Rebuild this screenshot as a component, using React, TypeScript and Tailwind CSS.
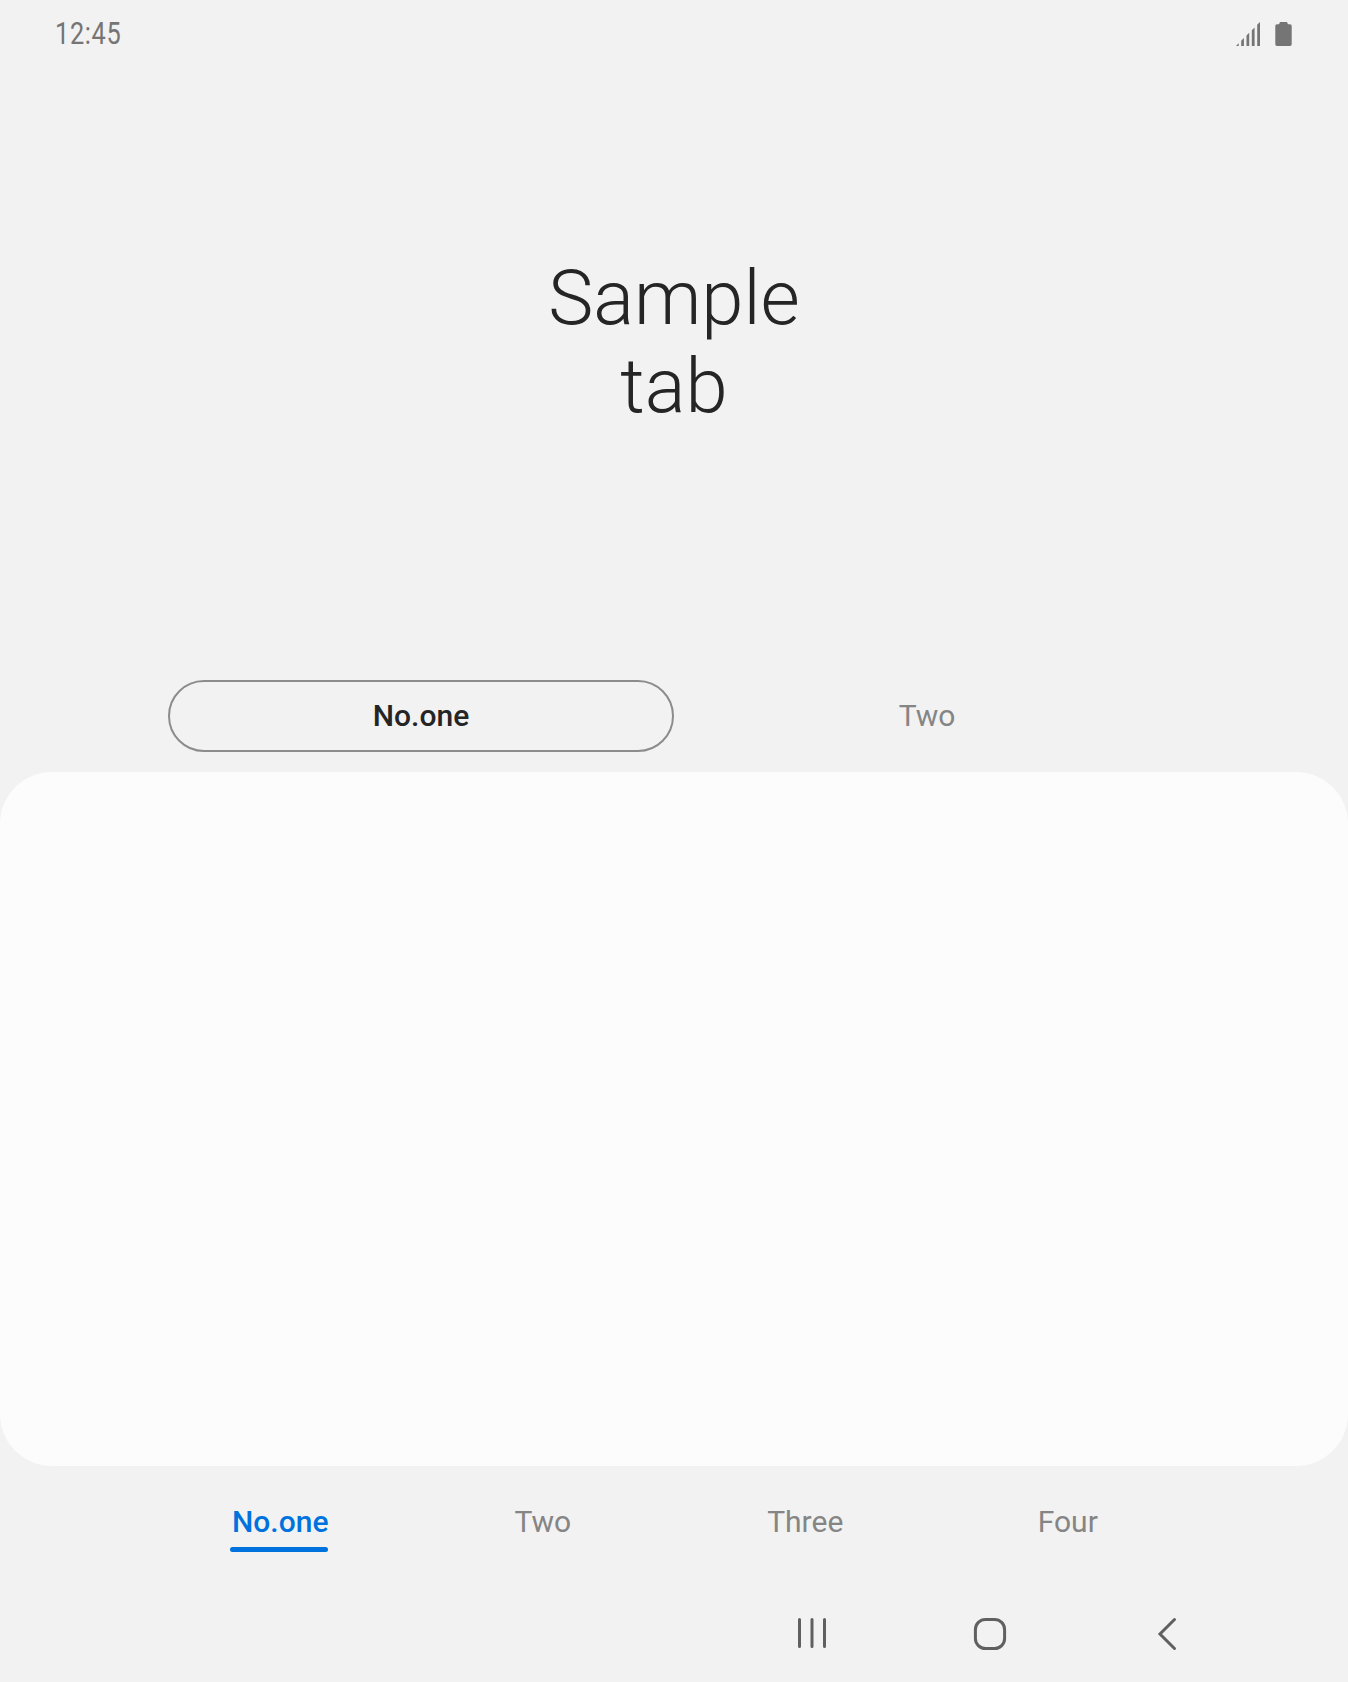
const topTabs = ["No.one", "Two"];
const bottomTabs = ["No.one", "Two", "Three", "Four"];

function SignalIcon() {
  return (
    <svg width="26" height="26" viewBox="0 0 26 26" fill="#757575">
      <path d="M0 25L2.700 22.300V25ZM5.200 25V19.700L7.900 17V25ZM10.500 25V14.500L13.200 11.800V25ZM15.800 25V9.200L18.600 6.400V25ZM21.200 25V3.800L24 1V25Z" />
    </svg>
  );
}

function BatteryIcon() {
  return (
    <svg width="17" height="26" viewBox="0 0 17 26" fill="#757575">
      <path d="M4 3.200L5 1H12L13 3.200H15Q16.700 3.200 16.700 5V23.300Q16.700 25 15 25H2Q0.300 25 0.300 23.300V5Q0.300 3.200 2 3.200Z" />
    </svg>
  );
}

export default function App() {
  return (
    <main className="flex h-[1682px] w-[1348px] flex-col overflow-hidden bg-[#f2f2f2] font-['Roboto',sans-serif]">
      <header className="flex h-[68px] shrink-0 items-center justify-between pl-[55px] pr-[56px] text-[#757575]">
        <span className="origin-left scale-x-[0.83] text-[30.5px] tracking-[0.8px]">12:45</span>
        <div className="flex items-center gap-[13px]">
          <SignalIcon />
          <BatteryIcon />
        </div>
      </header>
      <h1 className="mt-[186px] h-[176px] text-center text-[76px] font-light leading-[88px] text-[#252525]">
        Sample<br />tab
      </h1>
      <div className="mt-[250px] flex h-[72px] px-[168px]">
        {topTabs.map((label, i) => (
          <button
            key={label}
            className={
              i === 0
                ? "w-[506px] rounded-full border-2 border-[#8c8c8c] text-[30px] leading-9 font-medium text-[#252525]"
                : "w-[506px] text-[30px] leading-9 text-[#858585]"
            }
          >
            {label}
          </button>
        ))}
      </div>
      <section className="mt-5 h-[694px] shrink-0 rounded-[52px] bg-[#fcfcfc]" />
      <nav className="mt-[38px] flex h-12 w-[1050px] shrink-0 self-center">
        {bottomTabs.map((label, i) => (
          <button
            key={label}
            className={
              i === 0
                ? "flex flex-1 flex-col items-center text-[30px] leading-9 font-medium text-[#0072de]"
                : "flex flex-1 flex-col items-center text-[30px] leading-9 text-[#858585]"
            }
          >
            {label}
            {i === 0 && <span className="mt-[7px] mr-0.5 h-[5px] w-[98px] rounded-full bg-[#0072de]" />}
          </button>
        ))}
      </nav>
      <footer className="mt-[62px] flex h-10 shrink-0 items-center pl-[792px]">
        <button>
          <svg width="40" height="40" viewBox="0 0 40 40" fill="none" stroke="#606060" strokeWidth="3" strokeLinecap="round">
            <path d="M7.500 5.500V32.500M20 5.500V32.500M32.500 5.500V32.500" />
          </svg>
        </button>
        <button className="ml-[138px]">
          <svg width="40" height="40" viewBox="0 0 40 40" fill="none" stroke="#606060" strokeWidth="3">
            <rect x="5.400" y="5.400" width="29.200" height="29.200" rx="10" />
          </svg>
        </button>
        <button className="ml-[138px]">
          <svg width="40" height="40" viewBox="0 0 40 40" fill="none" stroke="#606060" strokeWidth="3" strokeLinecap="round">
            <path d="M26.500 5.500L12 20L26.500 34.500" />
          </svg>
        </button>
      </footer>
    </main>
  );
}
